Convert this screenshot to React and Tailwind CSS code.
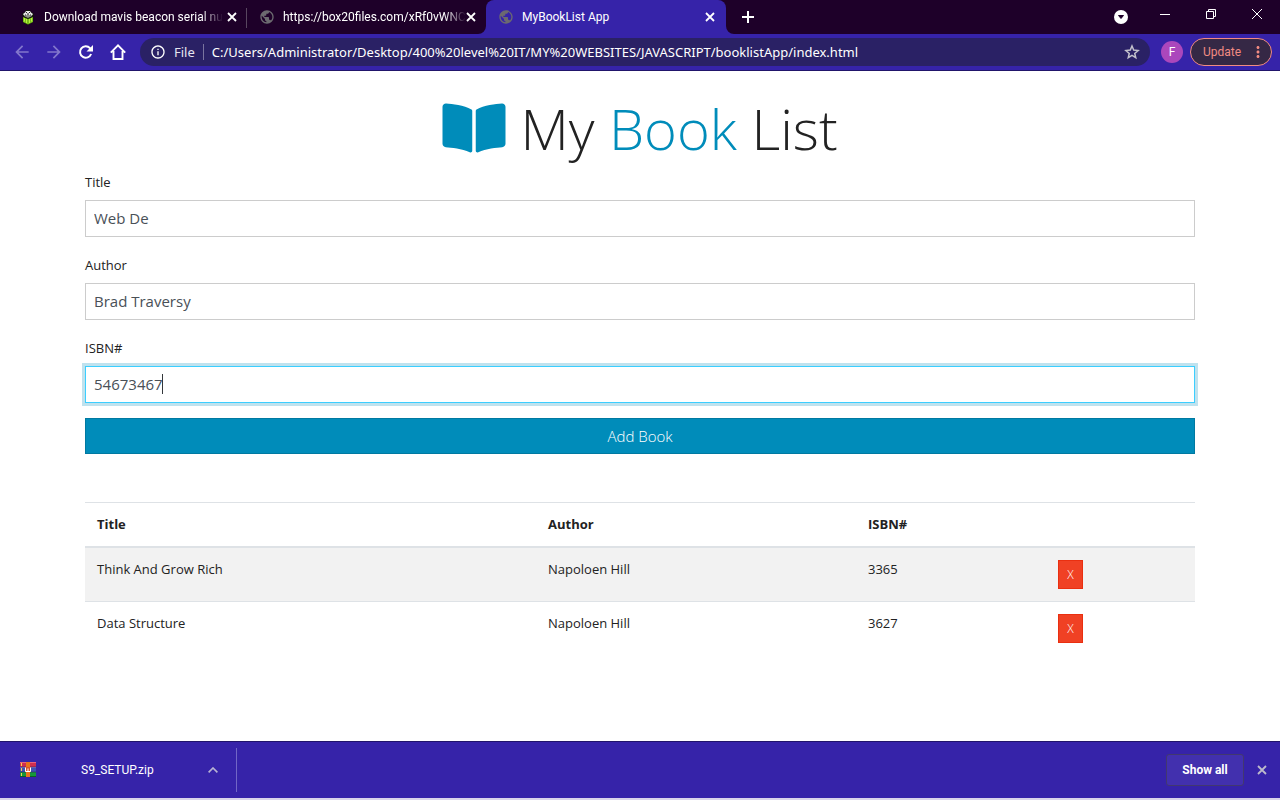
import React from "react";
import { FaBookOpen } from "react-icons/fa";
import {
  MdArrowBack,
  MdArrowForward,
  MdInfoOutline,
  MdMoreVert,
  MdPublic,
} from "react-icons/md";

const pageFont = "font-['Open_Sans','Noto_Sans',sans-serif]";
const chromeFont = "font-['Roboto','Noto_Sans',sans-serif]";

function Cross({ className }) {
  return (
    <svg viewBox="0 0 10 10" className={className} fill="none" stroke="currentColor" strokeWidth="1.8" aria-hidden="true">
      <path d="M1 1l8 8M9 1l-8 8" />
    </svg>
  );
}

function BoxIcon() {
  return (
    <svg viewBox="0 0 12 15" className="h-[15px] w-3 shrink-0" aria-hidden="true">
      <path d="M1 3l2-1 1-2h4l1 2 2 1 1 2-1 2v5l-5 3-5-3V7L0 5z" fill="#10150a" />
      <path d="M1 7l5 2 5-2v5l-5 2.500L1 12z" fill="#78bd1a" />
      <path d="M2.500 8v3.500M4.500 9v4M7.500 9v4M9.500 8v3.500" stroke="#b8f23f" strokeWidth="1" />
      <path d="M1 4l2-1.500L4 1h4l1 1.500L11 4l-1 1.500L6 7 2 5.500z" fill="#e9e9e9" />
      <path d="M2 6l4-1.500L10 6 6 8z" fill="#8d9488" />
      <path d="M4 2.500h1M7 2.500h1M5 4h2M3 5h1M8 5h1" stroke="#111" strokeWidth=".9" />
    </svg>
  );
}

function ArchiveIcon() {
  return (
    <svg viewBox="0 0 16 16" className="h-4 w-4 shrink-0" aria-hidden="true">
      <rect y="0" width="16" height="5" fill="#cf2f50" />
      <rect y="0" width="16" height="1" fill="#e8637c" />
      <rect y="5" width="16" height="5" fill="#3f52b5" />
      <rect y="5" width="16" height="1" fill="#7684d8" />
      <rect y="10" width="16" height="5" fill="#16973a" />
      <rect y="14" width="16" height="1" fill="#0b5c24" />
      <path d="M0 5h16M0 10h16" stroke="#29205e" strokeWidth=".6" />
      <path d="M1.500 1v3M1.500 6v3M1.500 11v3" stroke="#f4cf52" strokeWidth="1" />
      <rect x="6" width="4" height="15" fill="#e8741d" />
      <rect x="5" y="5" width="6" height="5" fill="#d9532c" />
      <path d="M5.500 5.500v4h5v-4M8 6.500v2.500" stroke="#fff" strokeWidth="1" fill="none" />
    </svg>
  );
}

function ReloadIcon() {
  return (
    <svg viewBox="0 0 16 16" className="h-4 w-4" aria-hidden="true">
      <path d="M13.100 10A5.700 5.700 0 1 1 12 4.200L13.500 5.700" fill="none" stroke="currentColor" strokeWidth="2" />
      <path d="M15 1v6.500H8.500z" fill="currentColor" />
    </svg>
  );
}

function HomeIcon() {
  return (
    <svg viewBox="0 0 16 16" className="h-4 w-4" aria-hidden="true">
      <path d="M.8 8.600L8 1.400l7.200 7.200M3.500 7v8h9V7" fill="none" stroke="currentColor" strokeWidth="1.900" />
    </svg>
  );
}

function StarIcon() {
  return (
    <svg viewBox="0 0 16 16" className="h-4 w-4" aria-hidden="true">
      <path
        d="M8 2l1.700 4.100 4.400.4-3.350 2.900 1 4.300L8 11.400l-3.750 2.300 1-4.300L1.900 6.500l4.400-.4z"
        fill="none"
        stroke="currentColor"
        strokeWidth="1.500"
      />
    </svg>
  );
}

function Tab({ title, icon, active, divider }) {
  return (
    <div
      className={
        active
          ? "relative flex h-full w-60 items-center rounded-t-lg bg-[#3623a9] pl-3 pr-[11px]"
          : "relative flex h-full w-[239px] items-center pl-3 pr-2.5"
      }
    >
      {active && (
        <>
          <svg viewBox="0 0 8 8" className="absolute bottom-0 right-full h-2 w-2 text-[#3623a9]" aria-hidden="true">
            <path d="M8 0v8H0a8 8 0 0 0 8-8z" fill="currentColor" />
          </svg>
          <svg viewBox="0 0 8 8" className="absolute bottom-0 left-full h-2 w-2 text-[#3623a9]" aria-hidden="true">
            <path d="M0 0v8h8a8 8 0 0 1-8-8z" fill="currentColor" />
          </svg>
        </>
      )}
      <span className="flex w-4 shrink-0 justify-center">{icon}</span>
      <button
        type="button"
        role="tab"
        aria-selected={active ? "true" : "false"}
        className="ml-2 min-w-0 flex-1 text-left text-[12px] leading-4 text-white"
      >
        <span
          className={
            active
              ? "whitespace-nowrap"
              : "whitespace-nowrap [mask-image:linear-gradient(to_right,black_88%,transparent)]"
          }
        >
          {title}
        </span>
      </button>
      <button type="button" aria-label="Close tab" className="text-white">
        <Cross className="h-2.5 w-2.5" />
      </button>
      {divider && <span className="absolute right-0 top-2 h-5 w-px bg-[#58465f]" />}
    </div>
  );
}

function TabStrip() {
  const globe = <MdPublic className="h-4 w-4 shrink-0 text-[#6c6a70]" aria-hidden="true" />;
  return (
    <div className="flex h-[34px] bg-[#1e0029]">
      <div role="tablist" className="flex pl-2">
        <Tab title="Download mavis beacon serial nu" icon={<BoxIcon />} divider />
        <Tab title="https://box20files.com/xRf0vWNC" icon={globe} />
        <Tab title="MyBookList App" icon={globe} active />
      </div>
      <button type="button" aria-label="New tab" className="ml-4 text-white">
        <svg viewBox="0 0 12 12" className="h-3 w-3" stroke="currentColor" strokeWidth="2" aria-hidden="true">
          <path d="M6 0v12M0 6h12" />
        </svg>
      </button>
      <div className="ml-auto flex items-center text-white">
        <button type="button" aria-label="Search tabs" className="mr-3.5">
          <svg viewBox="0 0 14 14" className="h-3.5 w-3.5" aria-hidden="true">
            <circle cx="7" cy="7" r="7" fill="#fff" />
            <path d="M4.500 5.500h5L7 8.500z" fill="#1e0029" stroke="#1e0029" />
          </svg>
        </button>
        <div className="flex h-7 self-start">
          <button type="button" aria-label="Minimize" className="flex w-[46px] items-center justify-center">
            <svg viewBox="0 0 10 10" className="h-2.5 w-2.5" stroke="currentColor" aria-hidden="true">
              <path d="M0 5.500h10" />
            </svg>
          </button>
          <button type="button" aria-label="Restore" className="flex w-[46px] items-center justify-center">
            <svg viewBox="0 0 10 10" className="h-2.5 w-2.5" fill="none" stroke="currentColor" aria-hidden="true">
              <path d="M.5 2.500h7v7h-7zM2.500 2.500v-2h7v7h-2" />
            </svg>
          </button>
          <button type="button" aria-label="Close window" className="flex w-[46px] items-center justify-center">
            <svg viewBox="0 0 10 10" className="h-2.5 w-2.5" stroke="currentColor" aria-hidden="true">
              <path d="M0 0l10 10M10 0L0 10" />
            </svg>
          </button>
        </div>
      </div>
    </div>
  );
}

function Toolbar() {
  return (
    <div className="flex h-[37px] items-center border-b border-[#21156b] bg-[#3623a9] pl-1.5 pr-2 text-white">
      <button type="button" aria-label="Back" className="flex w-8 justify-center text-[#8377cc]">
        <MdArrowBack className="h-5 w-5" />
      </button>
      <button type="button" aria-label="Forward" className="flex w-8 justify-center text-[#8377cc]">
        <MdArrowForward className="h-5 w-5" />
      </button>
      <button type="button" aria-label="Reload" className="flex w-8 justify-center">
        <ReloadIcon />
      </button>
      <button type="button" aria-label="Home" className="flex w-8 justify-center">
        <HomeIcon />
      </button>
      <div className="ml-1.5 flex h-7 flex-1 items-center rounded-full bg-[#2a2165] pl-2.5 pr-2.5 font-['Noto_Sans','Open_Sans',sans-serif]">
        <MdInfoOutline className="h-4 w-4 shrink-0" aria-hidden="true" />
        <span className="ml-2 text-[13px] leading-5 text-[#e6e4f0]">File</span>
        <span className="mx-2 h-4 w-px bg-[#7a749f]" />
        <input
          aria-label="Address"
          className="min-w-0 flex-1 bg-transparent text-[13px] leading-5 text-white outline-none"
          defaultValue="C:/Users/Administrator/Desktop/400%20level%20IT/MY%20WEBSITES/JAVASCRIPT/booklistApp/index.html"
        />
        <button type="button" aria-label="Bookmark this page" className="text-[#c3c1cc]">
          <StarIcon />
        </button>
      </div>
      <button
        type="button"
        aria-label="Profile"
        className="ml-[11px] h-[22px] w-[22px] rounded-full bg-[#ab47bc] text-center text-[12px] leading-[22px] text-white"
      >
        F
      </button>
      <button
        type="button"
        className="ml-[7px] flex h-7 w-[82px] items-center justify-between rounded-full border border-[#f28b82] bg-[#352845] pl-3 pr-1 text-[12px] leading-4 text-[#f28b82]"
      >
        Update
        <MdMoreVert className="h-[18px] w-[18px]" aria-hidden="true" />
      </button>
    </div>
  );
}

const inputClass =
  "block h-[37px] w-full border bg-white px-2 pb-0.5 text-[15px] leading-6 text-[#495057] outline-none";

function Field({ id, label, value, focused }) {
  return (
    <div>
      <label htmlFor={id} className="mb-2 block text-[13px] leading-5">
        {label}
      </label>
      <div className="relative">
        <input
          id={id}
          type="text"
          defaultValue={value}
          className={
            focused
              ? `${inputClass} border-[#3bceff] shadow-[0_0_0_3px_rgba(0,140,186,0.25)]`
              : `${inputClass} border-[#cccccc]`
          }
        />
        {focused && <span className="absolute left-[77px] top-2 h-5 w-px bg-[#33373b]" />}
      </div>
    </div>
  );
}

const books = [
  { title: "Think And Grow Rich", author: "Napoloen Hill", isbn: "3365" },
  { title: "Data Structure", author: "Napoloen Hill", isbn: "3627" },
];

function BookTable() {
  return (
    <table className="mt-12 w-full table-fixed border-collapse text-left text-[13px] leading-[19px]">
      <colgroup>
        <col className="w-[451px]" />
        <col className="w-[320px]" />
        <col className="w-[190px]" />
        <col className="w-[149px]" />
      </colgroup>
      <thead>
        <tr className="border-t border-b-2 border-t-[#dee2e6] border-b-[#dee2e6]">
          <th className="p-3 font-bold">Title</th>
          <th className="p-3 font-bold">Author</th>
          <th className="p-3 font-bold">ISBN#</th>
          <th className="p-3" aria-label="Remove" />
        </tr>
      </thead>
      <tbody>
        {books.map((book) => (
          <tr key={book.isbn} className="align-top odd:bg-[#f2f2f2] even:border-t even:border-[#dee2e6]">
            <td className="p-3">{book.title}</td>
            <td className="p-3">{book.author}</td>
            <td className="p-3">{book.isbn}</td>
            <td className="p-3">
              <a
                href="#"
                className="block h-[29px] w-[25px] border border-[#ea2f10] bg-[#f04124] text-center text-[12px] leading-[27px] font-light text-white"
              >
                X
              </a>
            </td>
          </tr>
        ))}
      </tbody>
    </table>
  );
}

function DownloadBar() {
  return (
    <footer className={`border-t border-[#21156b] bg-[#3623a9] text-[12px] text-white ${chromeFont}`}>
      <div className="flex h-14 items-center pr-[13px]">
        <div className="flex h-11 w-[237px] items-center border-r border-[#7266c6] pl-5 pr-[18px]">
          <ArchiveIcon />
          <span className="ml-[45px] leading-4">S9_SETUP.zip</span>
          <button type="button" aria-label="Download options" className="ml-auto text-[#b9b5d3]">
            <svg viewBox="0 0 10 6" className="h-1.5 w-2.5" fill="none" stroke="currentColor" strokeWidth="1.600" aria-hidden="true">
              <path d="M.6 5.400L5 1l4.400 4.400" />
            </svg>
          </button>
        </div>
        <button
          type="button"
          className="ml-auto h-8 w-[78px] rounded-[3px] border border-[#42386f] bg-[#4230ae] text-[12px] leading-4 font-bold"
        >
          Show all
        </button>
        <button type="button" aria-label="Close downloads" className="ml-[13px] text-[#bdbacb]">
          <Cross className="h-2.5 w-2.5" />
        </button>
      </div>
      <div className="h-0.5 bg-[#d9d4ea]" />
    </footer>
  );
}

export default function App() {
  return (
    <div className={`flex min-h-screen flex-col bg-white text-[#222222] ${pageFont}`}>
      <header className={chromeFont}>
        <TabStrip />
        <Toolbar />
      </header>
      <main className="mx-auto w-full max-w-[1140px] flex-1 px-[15px] pt-6">
        <h1 className="flex h-[66px] items-center justify-center text-[56px] leading-[66px] font-light">
          <FaBookOpen className="mr-3.5 h-14 w-16 text-[#008cba]" aria-hidden="true" />
          <span>
            My <span className="text-[#008cba]">Book</span> List
          </span>
        </h1>
        <form className="pt-[11px]" onSubmit={(e) => e.preventDefault()}>
          <div className="flex flex-col gap-[18px]">
            <Field id="title" label="Title" value="Web De" />
            <Field id="author" label="Author" value="Brad Traversy" />
            <Field id="isbn" label="ISBN#" value="54673467" focused />
          </div>
          <button
            type="submit"
            className="mt-[15px] block h-9 w-full border border-[#0079a1] bg-[#008cba] text-[15px] leading-6 font-light text-white"
          >
            Add Book
          </button>
        </form>
        <BookTable />
      </main>
      <DownloadBar />
    </div>
  );
}
